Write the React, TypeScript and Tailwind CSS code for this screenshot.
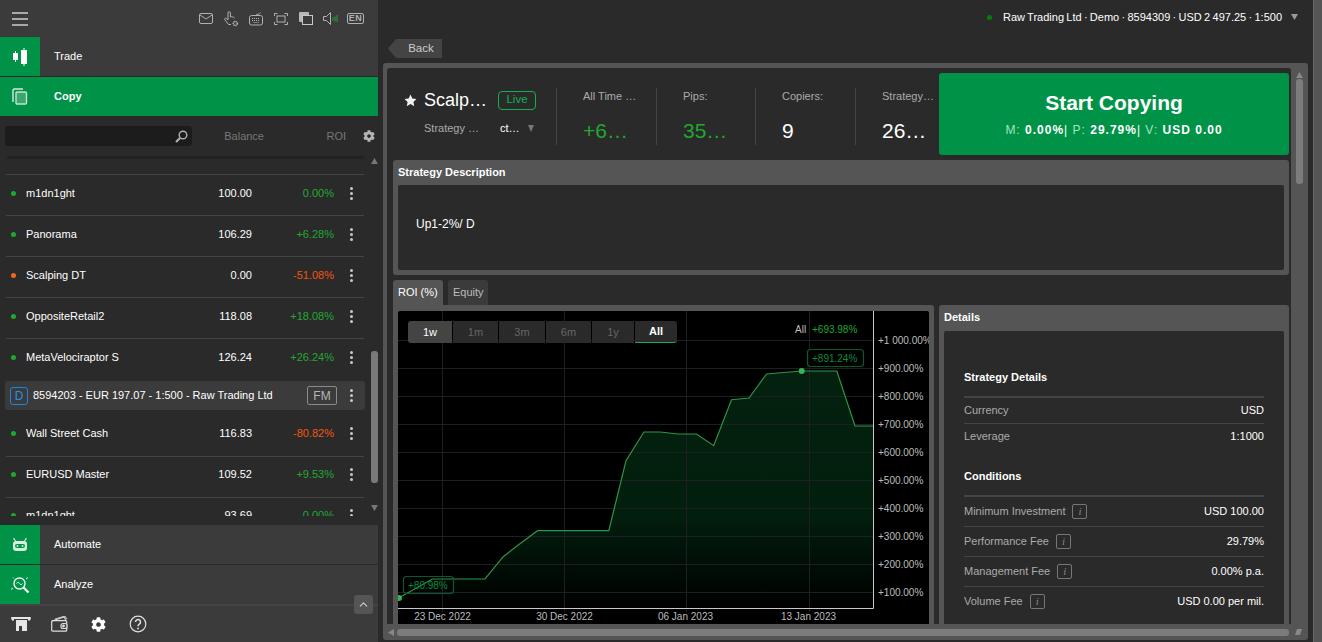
import { ReactNode } from 'react';
import { FaCog } from 'react-icons/fa';
import { ChevronUp } from 'lucide-react';

type ListItem = { name: string; bal: string; roi: string; dot: string; col: string; noLine?: boolean; tight?: boolean };

const rows: ListItem[] = [
  { name: '', bal: '', roi: '', dot: '', col: '' },
  { name: 'm1dn1ght', bal: '100.00', roi: '0.00%', dot: 'bg-[#1fa82f]', col: 'text-[#22a832]' },
  { name: 'Panorama', bal: '106.29', roi: '+6.28%', dot: 'bg-[#1fa82f]', col: 'text-[#22a832]' },
  { name: 'Scalping DT', bal: '0.00', roi: '-51.08%', dot: 'bg-[#f2661a]', col: 'text-[#f2560f]' },
  { name: 'OppositeRetail2', bal: '118.08', roi: '+18.08%', dot: 'bg-[#1fa82f]', col: 'text-[#22a832]' },
  { name: 'MetaVelociraptor S', bal: '126.24', roi: '+26.24%', dot: 'bg-[#1fa82f]', col: 'text-[#22a832]', noLine: true },
];

const rows2: ListItem[] = [
  { name: 'Wall Street Cash', bal: '116.83', roi: '-80.82%', dot: 'bg-[#1fa82f]', col: 'text-[#f2560f]', tight: true },
  { name: 'EURUSD Master', bal: '109.52', roi: '+9.53%', dot: 'bg-[#1fa82f]', col: 'text-[#22a832]', tight: true },
  { name: 'm1dn1ght', bal: '93.69', roi: '0.00%', dot: 'bg-[#1fa82f]', col: 'text-[#22a832]', tight: true },
];

const Kebab = () => (
  <div className="flex flex-col gap-[2px] items-center w-[4px]">
    <div className="w-[3px] h-[3px] rounded-full bg-[#c8c8c8]" />
    <div className="w-[3px] h-[3px] rounded-full bg-[#c8c8c8]" />
    <div className="w-[3px] h-[3px] rounded-full bg-[#c8c8c8]" />
  </div>
);

const ListRow = ({ r }: { r: ListItem }) => (
  <div className={`h-[41px] shrink-0 ml-[6px] w-[358px] flex items-center text-[11px] ${r.tight ? 'pb-[6px]' : 'pb-[4px]'} ${r.noLine ? '' : 'border-b border-[#444]'}`}>
    <div className={`w-[5px] h-[5px] rounded-full ml-[5px] ${r.dot}`} />
    <div className="ml-[10px] w-[166px] text-white truncate">{r.name}</div>
    <div className="w-[60px] text-right text-white">{r.bal}</div>
    <div className={`w-[82px] text-right ${r.col}`}>{r.roi}</div>
    <div className="ml-[15px]"><Kebab /></div>
  </div>
);

const NavRow = ({ label, icon, active }: { label: string; icon: ReactNode; active?: boolean }) => (
  <div className={`h-[39px] shrink-0 flex items-center text-[11px] text-white ${active ? 'bg-[#009247] font-bold' : 'bg-[#3b3b3b]'}`}>
    <div className="w-[40px] h-full flex items-center justify-center bg-[#009247]">{icon}</div>
    <span className="ml-[14px]">{label}</span>
  </div>
);

const HeadIcon = ({ children }: { children: ReactNode }) => (
  <div className="w-[25px] flex items-center justify-center">{children}</div>
);

const Sidebar = () => (
  <div className="w-[378px] shrink-0 flex flex-col h-full">
    <div className="h-[37px] shrink-0 bg-[#3b3b3b] flex items-center relative">
      <div className="ml-[12px] w-[16px] flex flex-col gap-[4px]">
        <div className="h-[2px] bg-[#a8a8a8]" />
        <div className="h-[2px] bg-[#a8a8a8]" />
        <div className="h-[2px] bg-[#a8a8a8]" />
      </div>
      <div className="ml-auto mr-[10px] flex items-center text-[#b0b0b0]">
        <HeadIcon>
          <svg width="14" height="11" viewBox="0 0 14 11" fill="none" stroke="currentColor"><rect x=".5" y=".5" width="13" height="10" rx="1.500" /><path d="M1 2l6 4 6-4" /></svg>
        </HeadIcon>
        <HeadIcon>
          <svg width="16" height="16" viewBox="0 0 16 16" fill="none" stroke="currentColor"><path d="M5 9V1.900a1.200 1.200 0 0 1 2.400 0V6c1.500-.5 3.200-.2 4.200 1.200M5 9L3.300 7.400a1 1 0 0 0-1.500 1.300L5.500 13.500H8" /><circle cx="12.300" cy="12.500" r="2" strokeWidth="1.600" strokeDasharray="1.200 .5" /></svg>
        </HeadIcon>
        <HeadIcon>
          <svg width="14" height="14" viewBox="0 0 14 14" fill="none" stroke="currentColor"><rect x=".5" y="3.500" width="13" height="9.500" rx="2" /><path d="M7 3.500c0-1.500 2-1 3-1.500s1-1 1.500-1.500" /><path d="M3 6.500h8M3 8.500h8M4.500 10.500h5" strokeDasharray="1 1" /></svg>
        </HeadIcon>
        <HeadIcon>
          <svg width="14" height="12" viewBox="0 0 14 12" fill="none" stroke="currentColor"><path d="M.5 3V.5h3M10.500.5h3V3M13.500 9v2.500h-3M3.500 11.500h-3V9" /><rect x="3" y="3" width="8" height="6" /></svg>
        </HeadIcon>
        <HeadIcon>
          <svg width="14" height="13" viewBox="0 0 14 13" fill="none"><rect x="0" y="0" width="10" height="10" rx="1" fill="#b8b8b8" /><rect x="3.500" y="3.500" width="10" height="9" fill="#3b3b3b" stroke="#c8c8c8" /></svg>
        </HeadIcon>
        <HeadIcon>
          <svg width="15" height="13" viewBox="0 0 15 13" fill="none" stroke="currentColor"><path d="M.5 4.500h3l4-4v12l-4-4h-3z" /><path d="M10 5.500v3M12 4.500v5M14 3v7" stroke="#2c9c46" /></svg>
        </HeadIcon>
        <HeadIcon>
          <div className="w-[17px] h-[11px] border border-[#b0b0b0] rounded-[2px] flex items-center justify-center text-[9px] leading-none font-bold tracking-[0.5px]">EN</div>
        </HeadIcon>
      </div>
    </div>
    <NavRow label="Trade" icon={
      <svg width="16" height="20" viewBox="0 0 16 20" fill="#fff"><rect x="3" y="4" width="1" height="11" /><rect x="1" y="6" width="5" height="7" /><rect x="11.500" y="1" width="1" height="18" /><rect x="9" y="3" width="6" height="14" /></svg>
    } />
    <div className="h-px shrink-0 bg-[#2a2a2a]" />
    <NavRow label="Copy" active icon={
      <svg width="16" height="17" viewBox="0 0 16 17" fill="none"><path d="M1 14V2.500Q1 1 2.500 1H11" stroke="#d5e9dd" strokeWidth="1.400" /><rect x="4" y="4" width="10.500" height="12" rx="1" stroke="#c3e2cf" strokeWidth="1.400" fill="#3aa76c" /></svg>
    } />
    <div className="flex-1 min-h-0 bg-[#2a2a2a] flex flex-col">
      <div className="h-[40px] shrink-0 flex items-center pl-[5px] text-[11px] text-[#777]">
        <div className="w-[187px] h-[20px] bg-[#1c1c1c] rounded-[3px] flex items-center justify-end pr-[4px]">
          <svg width="13" height="13" viewBox="0 0 13 13" fill="none" stroke="#b0b0b0" strokeWidth="1.400"><circle cx="8" cy="5" r="3.800" /><path d="M5 8l-4 4" strokeWidth="2.200" /></svg>
        </div>
        <div className="w-[72px] text-right">Balance</div>
        <div className="w-[82px] text-right">ROI</div>
        <FaCog className="ml-[17px] text-[#b5b5b5]" size={12} />
      </div>
      <div className="h-[360px] shrink-0 flex">
        <div className="w-[368px] shrink-0 h-full overflow-hidden relative">
          <div className="absolute top-0 left-[7px] w-[357px] h-[3px] bg-[#222] z-10" />
          <div className="flex flex-col -mt-[22px]">
            {rows.map((r, i) => <ListRow key={i} r={r} />)}
            <div className="h-[36px] shrink-0 pt-[1px]">
              <div className="ml-[5px] w-[360px] h-[29px] bg-[#3b3b3b] rounded-[3px] flex items-center text-[11px] text-white">
                <div className="ml-[5px] w-[18px] h-[18px] border border-[#1f83e0] rounded-[3px] flex items-center justify-center text-[#2a8fe8] text-[12px]">D</div>
                <div className="ml-[5px] w-[270px] whitespace-nowrap">8594203 - EUR 197.07 - 1:500 - Raw Trading Ltd</div>
                <div className="ml-[4px] w-[30px] h-[19px] border border-[#8a8a8a] rounded-[2px] flex items-center justify-center text-[#b5b5b5] text-[12px]">FM</div>
                <div className="ml-[12px]"><Kebab /></div>
              </div>
            </div>
            {rows2.map((r, i) => <ListRow key={i} r={r} />)}
          </div>
        </div>
        <div className="flex-1 flex flex-col items-end">
          <div className="mt-[1px] w-[8px] text-[#777] flex justify-center">
            <svg width="7" height="6" viewBox="0 0 7 6" className="mt-[1px]" fill="#777"><path d="M3.500 0L7 6H0z" /></svg>
          </div>
          <div className="mt-[187px] w-[7px] h-[132px] rounded-[3px] bg-[#7a7a7a]" />
          <div className="mt-[22px] w-[8px] flex justify-center">
            <svg width="7" height="6" viewBox="0 0 7 6" fill="#777"><path d="M3.500 6L7 0H0z" /></svg>
          </div>
        </div>
      </div>
      <div className="flex-1" />
    </div>
    <NavRow label="Automate" icon={
      <svg width="16" height="15" viewBox="0 0 16 15" fill="none"><path d="M3.500 4L1.500 1M12.500 4l2-3" stroke="#d8ecdf" strokeWidth="1.200" /><rect x="1" y="4" width="14" height="10" rx="3" fill="#d8ecdf" /><rect x="3" y="7" width="10" height="4" rx="2" fill="#009247" /><circle cx="5.500" cy="9" r="1" fill="#d8ecdf" /><circle cx="10.500" cy="9" r="1" fill="#d8ecdf" /></svg>
    } />
    <div className="h-px shrink-0 bg-[#2a2a2a]" />
    <NavRow label="Analyze" icon={
      <svg width="20" height="18" viewBox="0 0 20 18" fill="none" stroke="#e8f4ec"><circle cx="9.500" cy="7.500" r="5.500" strokeWidth="1.400" /><path d="M13.500 11.500l5 5" strokeWidth="2.400" /><path d="M6.500 7.500c1-1.500 2-1.500 3 0s2 1.500 3 0" strokeWidth="1" /><path d="M3 12l-2 1.500M16 3l2-1.500M4 2.500L3 1.500" strokeWidth="1" /></svg>
    } />
    <div className="h-[38px] shrink-0 bg-[#3b3b3b] border-t-2 border-[#444] flex items-center relative">
      <svg className="ml-[11px]" width="20" height="14" viewBox="0 0 20 14" fill="#e6e6e6"><path d="M1 0h18a1 1 0 0 1 1 1l-1 2.500h-2V2H3v1.500H1L0 1a1 1 0 0 1 1-1z" /><path d="M5 3h11v11H5z" /><rect x="8" y="9" width="3" height="5" fill="#3b3b3b" /></svg>
      <svg className="ml-[20px]" width="18" height="16" viewBox="0 0 18 16" fill="none" stroke="#dedede" strokeWidth="1.200"><path d="M1 5l12-4 2 3" /><path d="M4 3l10-3 2 3" strokeWidth=".8" /><rect x=".7" y="4.700" width="15" height="10.500" rx="1" /><rect x="10" y="7.500" width="6" height="5" rx="2" fill="#3b3b3b" /><circle cx="12.500" cy="10" r=".8" fill="#dedede" /></svg>
      <FaCog className="ml-[22px] text-white" size={15} />
      <svg className="ml-[23px]" width="18" height="18" viewBox="0 0 18 18" fill="none" stroke="#e0e0e0"><circle cx="9" cy="9" r="7.800" strokeWidth="1.200" /><path d="M6.500 7a2.500 2.500 0 1 1 3.800 2.100c-.9.600-1.300 1-1.300 2.100" strokeWidth="1.500" /><circle cx="9" cy="13.500" r=".9" fill="#e0e0e0" stroke="none" /></svg>
      <div className="absolute right-[5px] -top-[11px] w-[19px] h-[19px] rounded-[3px] bg-[#555] flex items-center justify-center">
        <ChevronUp size={13} className="text-[#ccc]" />
      </div>
    </div>
  </div>
);

const Stat = ({ label, value, cls, w }: { label: string; value: string; cls: string; w: string }) => (
  <div className={`${w} h-[57px] shrink-0 border-l border-[#444] pl-[26px] pt-[1px] flex flex-col`}>
    <div className="text-[11px] text-[#aaa] leading-[14px]">{label}</div>
    <div className="mt-[16px] flex"><span className={`text-[21px] leading-[24px] whitespace-nowrap ${cls}`}>{value}</span></div>
  </div>
);

const TopHeader = () => (
  <div className="h-[92px] shrink-0 pl-[6px] pt-[5px] flex">
    <div className="flex items-center -mt-[3px] h-[93px]">
      <div className="w-[163px] shrink-0 pl-[11px] self-start pt-[18px]">
        <div className="flex items-center">
          <svg width="13" height="13" viewBox="0 0 24 24" fill="#f0f0f0"><path d="M12 1l3.400 7.300 7.600.9-5.600 5.400 1.500 8L12 18.600 5.100 22.600l1.500-8L1 9.200l7.600-.9z" /></svg>
          <span className="ml-[7px] text-[18px] leading-[24px] text-white">Scalp…</span>
          <div className="ml-[11px] w-[38px] h-[19px] border border-[#12b14c] rounded-[4px] flex items-center justify-center text-[11.5px] text-[#12b14c]">Live</div>
        </div>
        <div className="mt-[8px] ml-[20px] flex items-center text-[11px]">
          <span className="text-[#aaa] w-[76px]">Strategy …</span>
          <span className="text-white w-[22px]">ct…</span>
          <svg className="ml-[6px]" width="6" height="7" viewBox="0 0 6 7" fill="#777"><path d="M0 0h6L3 7z" /></svg>
        </div>
      </div>
      <Stat label="All Time …" value="+6…" cls="text-[#1fa82f]" w="w-[100px]" />
      <Stat label="Pips:" value="35…" cls="text-[#1fa82f]" w="w-[99px]" />
      <Stat label="Copiers:" value="9" cls="text-white" w="w-[100px]" />
      <Stat label="Strategy…" value="26…" cls="text-white" w="w-[84px]" />
    </div>
    <div className="w-[350px] h-[82px] shrink-0 bg-[#009247] rounded-[3px] flex flex-col items-center justify-center text-white">
      <div className="text-[21px] font-bold leading-[24px]">Start Copying</div>
      <div className="mt-[8px] text-[12px] tracking-[1px] leading-[15px]">
        <span className="text-[#a6e3bd]">M: </span><b>0.00%</b>| <span className="text-[#a6e3bd]">P: </span><b>29.79%</b>| <span className="text-[#a6e3bd]">V: </span><b>USD 0.00</b>
      </div>
    </div>
  </div>
);

const pts = '399,597.7 432.4,579 485,579 503.2,556.7 518.3,545 537.6,530.7 608.8,530.7 626,460.7 643.9,432 660.3,432 677.9,434 696.5,434 713.7,445.7 731.5,399.7 749,398 766.6,374 801.7,371 836.8,371 855,426 873,426';
const grid = [340.5, 368.5, 396.5, 424.5, 452.5, 480.5, 508.5, 536.5, 564.5, 592.5];
const yLabels = ['+1 000.00%', '+900.00%', '+800.00%', '+700.00%', '+600.00%', '+500.00%', '+400.00%', '+300.00%', '+200.00%', '+100.00%'];
const xTicks = [
  { x: 442.5, lx: 442.5, t: '23 Dec 2022' },
  { x: 564.5, lx: 564.5, t: '30 Dec 2022' },
  { x: 686.5, lx: 685.5, t: '06 Jan 2023' },
  { x: 809.5, lx: 808.5, t: '13 Jan 2023' },
];
const ranges = [
  { t: '1w', w: 'w-[44px]', c: 'bg-[#444] text-white rounded-l-[3px]' },
  { t: '1m', w: 'w-[45px]', c: 'bg-[#2a2a2a] text-[#666]' },
  { t: '3m', w: 'w-[46px]', c: 'bg-[#2a2a2a] text-[#666]' },
  { t: '6m', w: 'w-[45px]', c: 'bg-[#2a2a2a] text-[#666]' },
  { t: '1y', w: 'w-[42px]', c: 'bg-[#2a2a2a] text-[#666]' },
  { t: 'All', w: 'w-[42px]', c: 'bg-[#2a2a2a] text-white font-bold border-b border-[#12b14c] rounded-r-[3px]' },
];

const Chart = () => (
  <div className="relative h-[330px] bg-black rounded-t-[2px] overflow-hidden">
    <svg width="531" height="330" viewBox="398 311 531 330" className="block">
      <defs>
        <linearGradient id="roiFill" gradientUnits="userSpaceOnUse" x1="0" y1="371" x2="0" y2="608">
          <stop offset="0" stopColor="#04210f" />
          <stop offset="0.6" stopColor="#021f0e" />
          <stop offset="1" stopColor="#000" />
        </linearGradient>
      </defs>
      <polygon points={`399,608 ${pts} 873,608`} fill="url(#roiFill)" />
      {grid.map(y => <line key={y} x1="398" x2="873" y1={y} y2={y} stroke="#1c1f24" />)}
      {xTicks.map(t => <line key={t.x} x1={t.x} x2={t.x} y1="311" y2="612" stroke="#1c1f24" />)}
      <polyline points={pts} fill="none" stroke="#2f9546" strokeWidth="1.200" />
      <line x1="873.500" x2="873.500" y1="311" y2="608.500" stroke="#c8c8c8" />
      <line x1="398" x2="873.500" y1="608.500" y2="608.500" stroke="#c8c8c8" />
      <g fontSize="10" fill="#bdbdbd">
        {grid.map((y, i) => <text key={y} x="878" y={y + 3.500}>{yLabels[i]}</text>)}
        {xTicks.map(t => <text key={t.t} x={t.lx} y="620" textAnchor="middle">{t.t}</text>)}
        <text x="795" y="332.500">All</text>
        <text x="812" y="332.500" fill="#1fa82f">+693.98%</text>
      </g>
      <circle cx="801.700" cy="371" r="3" fill="#35b454" />
      <circle cx="399" cy="598" r="3" fill="#35b454" />
      <rect x="807.500" y="349.500" width="56" height="17" rx="3" fill="#000" stroke="#0a5a30" strokeWidth="1.200" />
      <text x="812" y="361.500" fontSize="10" fill="#0c8a3e">+891.24%</text>
      <rect x="403.500" y="576.500" width="50" height="17" rx="3" fill="none" stroke="#0a5a30" strokeWidth="1.200" />
      <text x="408" y="588.500" fontSize="10" fill="#0c8a3e">+80.98%</text>
    </svg>
    <div className="absolute left-[10px] top-[10px] flex gap-px text-[11px]">
      {ranges.map(r => (
        <div key={r.t} className={`${r.w} h-[22px] flex items-center justify-center ${r.c}`}>{r.t}</div>
      ))}
    </div>
  </div>
);

const Info = () => (
  <span className="ml-[7px] w-[15px] h-[15px] border border-[#777] rounded-[2px] flex items-center justify-center text-[#888] text-[11px] italic font-['Liberation_Serif',serif]">i</span>
);

const Row = ({ label, value, info, h, line }: { label: string; value: string; info?: boolean; h: string; line?: boolean }) => (
  <div className={`${h} flex items-center justify-between ${line ? 'border-b border-[#444]' : ''}`}>
    <div className="flex items-center text-[#aaa]">{label}{info && <Info />}</div>
    <div className="text-white">{value}</div>
  </div>
);

const Details = () => (
  <div className="h-[330px] bg-[#2a2a2a] rounded-t-[2px] px-[20px] pt-[38px] text-[11px]">
    <div className="h-[16px] leading-[16px] font-bold text-white">Strategy Details</div>
    <div className="mt-[11px] h-[2px] bg-[#444]" />
    <Row label="Currency" value="USD" h="h-[26px]" line />
    <Row label="Leverage" value="1:1000" h="h-[25px]" />
    <div className="mt-[19px] h-[16px] leading-[16px] font-bold text-white">Conditions</div>
    <div className="mt-[11px] h-[2px] bg-[#444]" />
    <Row label="Minimum Investment" value="USD 100.00" info h="h-[30px]" line />
    <Row label="Performance Fee" value="29.79%" info h="h-[30px]" line />
    <Row label="Management Fee" value="0.00% p.a." info h="h-[30px]" line />
    <Row label="Volume Fee" value="USD 0.00 per mil." info h="h-[29px]" />
  </div>
);

const Main = () => (
  <div className="flex-1 min-w-0 flex flex-col h-full bg-[#2a2a2a]">
    <div className="h-[34px] shrink-0 flex items-center justify-end pr-[15px] text-[11px] text-white">
      <div className="w-[5px] h-[5px] rounded-full bg-[#0a7a0a]" />
      <span className="ml-[11px] [word-spacing:-0.75px]">Raw Trading Ltd · Demo · 8594309 · USD 2 497.25 · 1:500</span>
      <svg className="ml-[9px]" width="7" height="6" viewBox="0 0 7 6" fill="#999"><path d="M0 0h7L3.500 6z" /></svg>
    </div>
    <div className="h-[29px] shrink-0 pl-[10px] pt-[5px]">
      <div className="w-[54px] h-[19px] bg-[#444] text-[#ccc] text-[11.5px] flex items-center justify-center pl-[12px] [clip-path:polygon(8px_0,100%_0,100%_100%,8px_100%,0_50%)]">Back</div>
    </div>
    <div className="ml-[5px] mr-[5px] mb-[2px] flex-1 min-h-0 bg-[#555] rounded-[3px] flex flex-col">
      <div className="flex-1 min-h-0 flex pt-[5px] pl-[4px]">
        <div className="w-[904px] shrink-0 bg-[#2a2a2a] rounded-t-[3px] overflow-hidden">
          <TopHeader />
          <div className="ml-[6px] w-[896px] h-[115px] bg-[#555] rounded-[3px] px-[5px] flex flex-col">
            <div className="h-[25px] shrink-0 flex items-center font-bold text-[11px] text-white">Strategy Description</div>
            <div className="h-[85px] bg-[#2a2a2a] rounded-[2px] pl-[18px] pt-[32px] text-[12px] leading-[15px] text-white">Up1-2%/ D</div>
          </div>
          <div className="mt-[5px] ml-[6px] flex h-[25px] gap-[5px] text-[11px]">
            <div className="w-[50px] bg-[#555] text-white rounded-t-[3px] flex items-center pl-[5px]">ROI (%)</div>
            <div className="w-[40px] bg-[#3b3b3b] text-[#bbb] rounded-t-[3px] flex items-center pl-[5px]">Equity</div>
          </div>
          <div className="ml-[6px] w-[896px] flex gap-[5px]">
            <div className="w-[541px] bg-[#555] rounded-tr-[3px] px-[5px] pt-[6px]"><Chart /></div>
            <div className="w-[350px] bg-[#555] rounded-t-[3px] px-[5px]">
              <div className="h-[26px] pb-[2px] flex items-center font-bold text-[11px] text-white">Details</div>
              <Details />
            </div>
          </div>
        </div>
        <div className="flex-1 flex flex-col items-center pt-[4px]">
          <svg width="7" height="6" viewBox="0 0 7 6" fill="#888"><path d="M3.500 0L7 6H0z" /></svg>
          <div className="mt-[1px] w-[7px] h-[105px] rounded-[3px] bg-[#7c7c7c]" />
        </div>
      </div>
      <div className="h-[16px] shrink-0 flex items-center pl-[5px]">
        <svg width="6" height="7" viewBox="0 0 6 7" fill="#888"><path d="M0 3.500L6 0v7z" /></svg>
        <div className="ml-[3px] w-[892px] h-[7px] rounded-[3px] bg-[#7c7c7c]" />
        <svg className="ml-[6px]" width="7" height="6" viewBox="0 0 7 6" fill="#888"><path d="M2 0h5l-2 6H0z" /></svg>
      </div>
    </div>
  </div>
);

export default function App() {
  return (
    <div className="w-[1322px] h-[642px] overflow-hidden flex bg-[#2a2a2a] font-['Liberation_Sans',Arial,sans-serif]">
      <Sidebar />
      <Main />
      <div className="w-[9px] shrink-0 h-full bg-[#555] border-l border-[#6a6a6a]" />
    </div>
  );
}
